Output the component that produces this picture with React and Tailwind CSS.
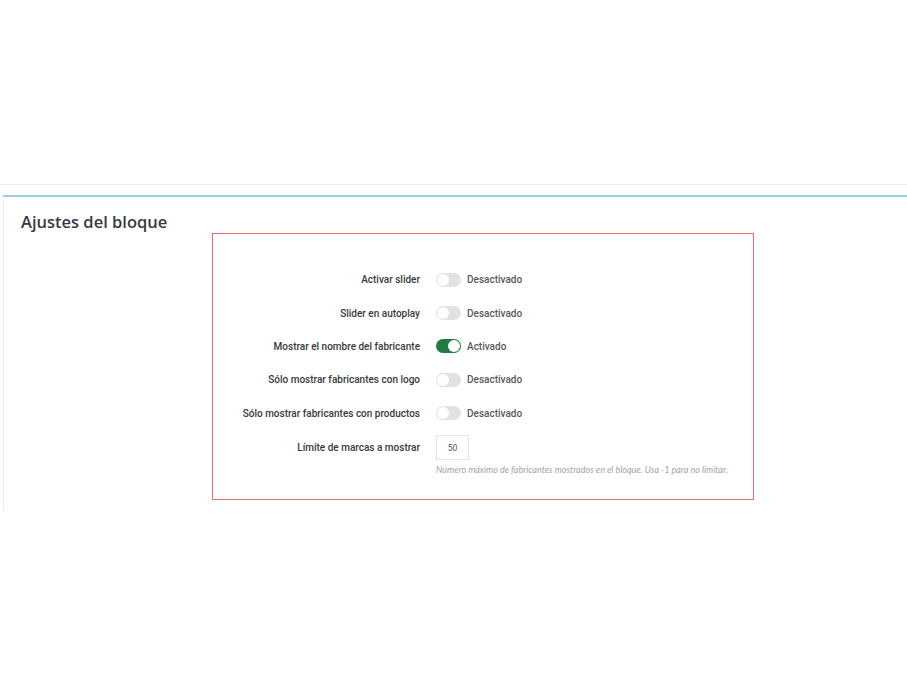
import React, { useState } from "react";

const settings = [
    { id: "slider", label: "Activar slider", on: false },
    { id: "autoplay", label: "Slider en autoplay", on: false },
    { id: "name", label: "Mostrar el nombre del fabricante", on: true },
    { id: "logo", label: "Sólo mostrar fabricantes con logo", on: false },
    { id: "products", label: "Sólo mostrar fabricantes con productos", on: false },
];

function Toggle({ on, onChange }) {
    return (
        <button
            type="button"
            onClick={onChange}
            className={`relative h-[14px] w-[25px] rounded-full transition-colors ${on ? "bg-[#1f7d41]" : "bg-[#e2e2e2]"}`}
        >
            <span
                className={`absolute top-[1px] h-[12px] w-[12px] rounded-full bg-white ${on ? "left-[12px]" : "left-[1px]"}`}
            />
        </button>
    );
}

export default function App() {
    const [values, setValues] = useState(() => Object.fromEntries(settings.map((s) => [s.id, s.on])));
    const [limit, setLimit] = useState("50");

    return (
        <div className="min-h-screen bg-white pt-[184px] font-['Open_Sans',sans-serif] text-[#363a41]">
            <div className="border-t border-[#ececec] pt-[10px]">
                <div className="ml-[3px] h-[316px] border-l border-t-2 border-l-[#ececec] border-t-[#97d2e3]">
                    <h2 className="pl-[17px] pt-[14px] text-[16.5px] leading-[22px] font-semibold">Ajustes del bloque</h2>
                    <div className="ml-[208px] h-[267px] w-[542px] border border-[#ee6b6b] pt-[29px] font-['Roboto',sans-serif]">
                        {settings.map((s) => (
                            <div key={s.id} className="flex h-[33.4px] items-center">
                                <label className="w-[207px] text-right text-[10px] font-medium">{s.label}</label>
                                <div className="ml-[16px] flex items-center gap-[6px]">
                                    <Toggle
                                        on={values[s.id]}
                                        onChange={() => setValues((v) => ({ ...v, [s.id]: !v[s.id] }))}
                                    />
                                    <span className="text-[10px] font-medium text-[#55585d]">
                                        {values[s.id] ? "Activado" : "Desactivado"}
                                    </span>
                                </div>
                            </div>
                        ))}
                        <div className="flex items-start pt-[4px]">
                            <label className="w-[207px] pt-[6px] text-right text-[10px] font-medium">
                                Límite de marcas a mostrar
                            </label>
                            <div className="ml-[16px]">
                                <input
                                    value={limit}
                                    onChange={(e) => setLimit(e.target.value)}
                                    className="h-[25px] w-[33px] border border-[#e4e4e4] text-center text-[8.5px] text-[#555] outline-none"
                                />
                                <p className="mt-[3px] font-['Lato',sans-serif] text-[9px] italic text-[#a3a3a3]">
                                    Número máximo de fabricantes mostrados en el bloque. Usa -1 para no limitar.
                                </p>
                            </div>
                        </div>
                    </div>
                </div>
            </div>
        </div>
    );
}
